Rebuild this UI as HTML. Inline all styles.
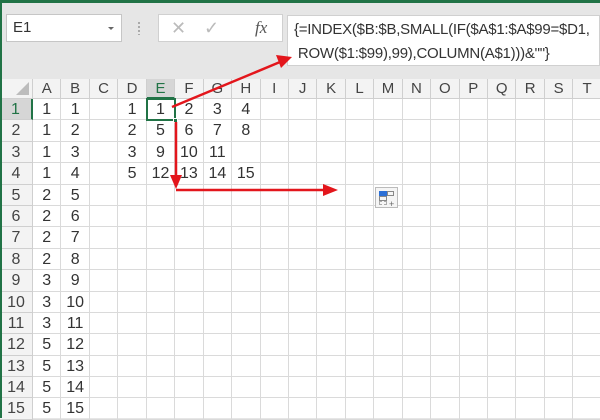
<!DOCTYPE html>
<html><head><meta charset="utf-8"><style>
*{margin:0;padding:0;box-sizing:border-box}
body{width:600px;height:418px;overflow:hidden;background:#e6e6e6;font-family:"Liberation Sans",Arial,sans-serif;position:relative}
.abs{position:absolute}
#grid{position:absolute;left:0;top:79px;width:600px;height:339px;display:grid;
grid-template-columns:33px repeat(20,28.45px);grid-template-rows:20px repeat(15,21.4px);
background:#fff}
#grid div{border-right:1px solid #dadada;border-bottom:1px solid #dadada;font-size:16px;color:#333;text-align:center;line-height:21px;white-space:nowrap}
#grid .ch{background:#f3f3f3;color:#444;font-size:15px;border-color:#cfcfcf;line-height:20px}
#grid .rh{background:#f3f3f3;color:#444;border-color:#cfcfcf}
#grid .hi{background:#d6d6d6;color:#217346}
</style></head><body>
<div class="abs" style="left:0;top:0;width:600px;height:3px;background:#217346"></div>
<div class="abs" style="left:0;top:0;width:2px;height:80px;background:#217346"></div>
<div class="abs" style="left:6px;top:14px;width:116px;height:28px;background:#fff;border:1px solid #c6c6c6;font-size:15px;line-height:26px;padding-left:6px;color:#333">E1</div>
<div class="abs" style="left:108px;top:27px;width:0;height:0;border-left:3px solid transparent;border-right:3px solid transparent;border-top:3px solid #666"></div>
<div class="abs" style="left:138px;top:22px;width:2px;height:13px;background:repeating-linear-gradient(#aaa 0 2px,transparent 2px 4px)"></div>
<div class="abs" style="left:158px;top:14px;width:125px;height:28px;background:#fff;border:1px solid #d0d0d0;color:#bbb;font-size:18px;line-height:26px">
<span class="abs" style="left:12px">✕</span><span class="abs" style="left:45px">✓</span><span class="abs" style="left:96px;color:#555;font-family:'Liberation Serif',serif;font-style:italic;font-size:17px">fx</span></div>
<div class="abs" style="left:287px;top:15px;width:313px;height:51px;background:#fff;border:1px solid #d0d0d0;font-size:15px;color:#333;line-height:24px;padding:2px 0 0 6px;letter-spacing:-0.25px">{=INDEX($B:$B,SMALL(IF($A$1:$A$99=$D1,<br>&nbsp;ROW($1:$99),99),COLUMN(A$1)))&amp;""}</div>
<div id="grid">
<div class="ch" style="position:relative"><span style="position:absolute;right:3px;bottom:3px;width:0;height:0;border-left:13px solid transparent;border-bottom:13px solid #bcbcbc"></span></div>
<div class="ch">A</div><div class="ch">B</div><div class="ch">C</div><div class="ch">D</div><div class="ch hi" style="border-bottom:2px solid #217346">E</div><div class="ch">F</div><div class="ch">G</div><div class="ch">H</div><div class="ch">I</div><div class="ch">J</div><div class="ch">K</div><div class="ch">L</div><div class="ch">M</div><div class="ch">N</div><div class="ch">O</div><div class="ch">P</div><div class="ch">Q</div><div class="ch">R</div><div class="ch">S</div><div class="ch">T</div>
<div class="rh hi" style="border-right:2px solid #217346">1</div><div>1</div><div>1</div><div></div><div>1</div><div>1</div><div>2</div><div>3</div><div>4</div><div></div><div></div><div></div><div></div><div></div><div></div><div></div><div></div><div></div><div></div><div></div><div></div>
<div class="rh">2</div><div>1</div><div>2</div><div></div><div>2</div><div>5</div><div>6</div><div>7</div><div>8</div><div></div><div></div><div></div><div></div><div></div><div></div><div></div><div></div><div></div><div></div><div></div><div></div>
<div class="rh">3</div><div>1</div><div>3</div><div></div><div>3</div><div>9</div><div>10</div><div>11</div><div></div><div></div><div></div><div></div><div></div><div></div><div></div><div></div><div></div><div></div><div></div><div></div><div></div>
<div class="rh">4</div><div>1</div><div>4</div><div></div><div>5</div><div>12</div><div>13</div><div>14</div><div>15</div><div></div><div></div><div></div><div></div><div></div><div></div><div></div><div></div><div></div><div></div><div></div><div></div>
<div class="rh">5</div><div>2</div><div>5</div><div></div><div></div><div></div><div></div><div></div><div></div><div></div><div></div><div></div><div></div><div></div><div></div><div></div><div></div><div></div><div></div><div></div><div></div>
<div class="rh">6</div><div>2</div><div>6</div><div></div><div></div><div></div><div></div><div></div><div></div><div></div><div></div><div></div><div></div><div></div><div></div><div></div><div></div><div></div><div></div><div></div><div></div>
<div class="rh">7</div><div>2</div><div>7</div><div></div><div></div><div></div><div></div><div></div><div></div><div></div><div></div><div></div><div></div><div></div><div></div><div></div><div></div><div></div><div></div><div></div><div></div>
<div class="rh">8</div><div>2</div><div>8</div><div></div><div></div><div></div><div></div><div></div><div></div><div></div><div></div><div></div><div></div><div></div><div></div><div></div><div></div><div></div><div></div><div></div><div></div>
<div class="rh">9</div><div>3</div><div>9</div><div></div><div></div><div></div><div></div><div></div><div></div><div></div><div></div><div></div><div></div><div></div><div></div><div></div><div></div><div></div><div></div><div></div><div></div>
<div class="rh">10</div><div>3</div><div>10</div><div></div><div></div><div></div><div></div><div></div><div></div><div></div><div></div><div></div><div></div><div></div><div></div><div></div><div></div><div></div><div></div><div></div><div></div>
<div class="rh">11</div><div>3</div><div>11</div><div></div><div></div><div></div><div></div><div></div><div></div><div></div><div></div><div></div><div></div><div></div><div></div><div></div><div></div><div></div><div></div><div></div><div></div>
<div class="rh">12</div><div>5</div><div>12</div><div></div><div></div><div></div><div></div><div></div><div></div><div></div><div></div><div></div><div></div><div></div><div></div><div></div><div></div><div></div><div></div><div></div><div></div>
<div class="rh">13</div><div>5</div><div>13</div><div></div><div></div><div></div><div></div><div></div><div></div><div></div><div></div><div></div><div></div><div></div><div></div><div></div><div></div><div></div><div></div><div></div><div></div>
<div class="rh">14</div><div>5</div><div>14</div><div></div><div></div><div></div><div></div><div></div><div></div><div></div><div></div><div></div><div></div><div></div><div></div><div></div><div></div><div></div><div></div><div></div><div></div>
<div class="rh">15</div><div>5</div><div>15</div><div></div><div></div><div></div><div></div><div></div><div></div><div></div><div></div><div></div><div></div><div></div><div></div><div></div><div></div><div></div><div></div><div></div><div></div>
</div>
<div class="abs" style="left:0;top:79px;width:2px;height:339px;background:#217346"></div>
<div class="abs" style="left:146px;top:98px;width:30px;height:23px;border:2px solid #217346"></div>
<div class="abs" style="left:173px;top:118px;width:5px;height:5px;background:#217346;border:1px solid #fff"></div>
<div class="abs" style="left:375px;top:187px;width:23px;height:21px;border:1px solid #bbb;background:#f5f5f5">
<div class="abs" style="left:3px;top:3px;width:8px;height:5px;background:#2b6fd6"></div>
<div class="abs" style="left:11px;top:3px;width:7px;height:5px;border:1px solid #888"></div>
<div class="abs" style="left:3px;top:8px;width:8px;height:5px;border:1px solid #888"></div>
<div class="abs" style="left:3px;top:13px;width:8px;height:4px;border:1px dashed #aaa"></div>
<div class="abs" style="left:13px;top:11px;font-size:9px;color:#666">+</div></div>
<svg class="abs" style="left:0;top:0" width="600" height="418">
<g stroke="#e3161c" stroke-width="2.5" fill="none">
<line x1="172" y1="107" x2="280" y2="62"/>
<line x1="176" y1="122" x2="176" y2="178"/>
<line x1="176" y1="190" x2="326" y2="190"/>
</g>
<g fill="#e3161c">
<polygon points="292,57 276,55 281,68"/>
<polygon points="176,189 170,175 182,175"/>
<polygon points="338,190 323,184 323,196"/>
</g>
</svg>
</body></html>
